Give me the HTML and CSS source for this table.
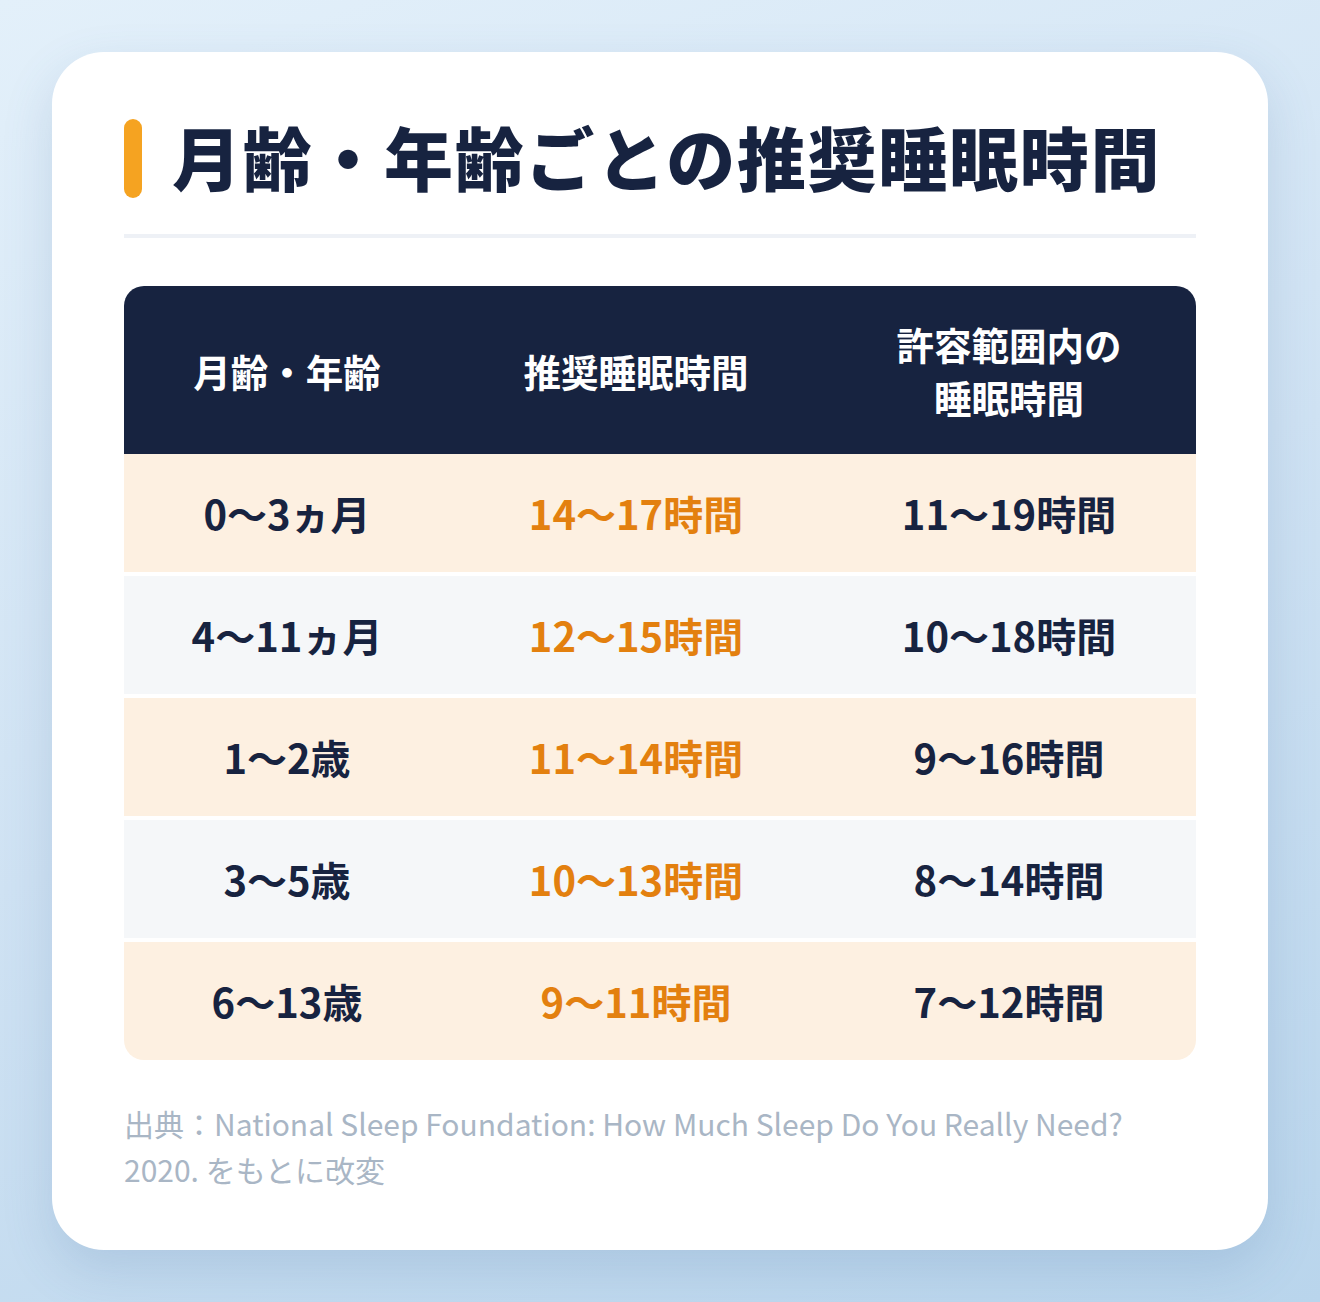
FILE: index.html
```html
<!DOCTYPE html>
<html lang="ja">
<head>
<meta charset="utf-8">
<link rel="stylesheet" href="styles.css">
</head>
<body>
<div class="page">
  <div class="card">
    <div class="title-row">
      <span class="bar"></span>
      <h1 class="title">月齢・年齢ごとの推奨睡眠時間</h1>
    </div>
    <div class="divider"></div>
    <div class="table">
      <div class="row head">
        <div class="cell">月齢・年齢</div>
        <div class="cell">推奨睡眠時間</div>
        <div class="cell">許容範囲内の<br>睡眠時間</div>
      </div>
      <div class="row peach">
        <div class="cell">0〜3ヵ月</div>
        <div class="cell rec">14〜17時間</div>
        <div class="cell">11〜19時間</div>
      </div>
      <div class="row gray">
        <div class="cell">4〜11ヵ月</div>
        <div class="cell rec">12〜15時間</div>
        <div class="cell">10〜18時間</div>
      </div>
      <div class="row peach">
        <div class="cell">1〜2歳</div>
        <div class="cell rec">11〜14時間</div>
        <div class="cell">9〜16時間</div>
      </div>
      <div class="row gray">
        <div class="cell">3〜5歳</div>
        <div class="cell rec">10〜13時間</div>
        <div class="cell">8〜14時間</div>
      </div>
      <div class="row peach">
        <div class="cell">6〜13歳</div>
        <div class="cell rec">9〜11時間</div>
        <div class="cell">7〜12時間</div>
      </div>
    </div>
    <p class="source">出典：National Sleep Foundation: How Much Sleep Do You Really Need?<br>2020. をもとに改変</p>
  </div>
</div>
</body>
</html>
```
FILE: styles.css
```css
html, body {
  margin: 0;
  padding: 0;
}
body {
  font-family: "Noto Sans CJK JP", "Noto Sans", sans-serif;
  color: #172340;
  background: linear-gradient(160deg, #e3f0fa 0%, #cfe2f3 50%, #b9d5ec 100%);
  width: 1320px;
  height: 1302px;
  overflow: hidden;
}
.page {
  padding: 52px;
}
.card {
  background: #ffffff;
  border-radius: 52px;
  padding: 66px 72px 56px;
  box-shadow: 0 20px 50px rgba(70, 110, 160, 0.18);
  height: 1198px;
  box-sizing: border-box;
}
.title-row {
  display: flex;
  align-items: center;
  height: 80px;
  gap: 30px;
}
.bar {
  width: 18px;
  height: 79px;
  border-radius: 9px;
  background: #f5a321;
  flex: none;
}
.title {
  margin: -5px 0 0;
  font-size: 69px;
  font-weight: 900;
  letter-spacing: 1.7px;
  line-height: 80px;
  color: #172340;
  white-space: nowrap;
}
.divider {
  margin-top: 36px;
  height: 4px;
  background: #eef1f6;
}
.table {
  margin-top: 48px;
  display: flex;
  flex-direction: column;
  gap: 4px;
  border-radius: 20px;
  overflow: hidden;
}
.row {
  display: grid;
  grid-template-columns: 326fr 372fr 374fr;
  height: 118px;
  align-items: center;
  text-align: center;
  font-size: 40px;
  font-weight: 700;
}
.row.head {
  height: 168px;
  margin-bottom: -4px;
  background: #172340;
  color: #ffffff;
  font-size: 37.5px;
  line-height: 53px;
}
.row.peach { background: #fdf0e1; }
.row.gray { background: #f5f7f9; }
.cell.rec { color: #e3800f; }
.source {
  margin: 40px 0 0;
  font-size: 30px;
  line-height: 46px;
  color: #a9b6c5;
  font-weight: 400;
}
```
